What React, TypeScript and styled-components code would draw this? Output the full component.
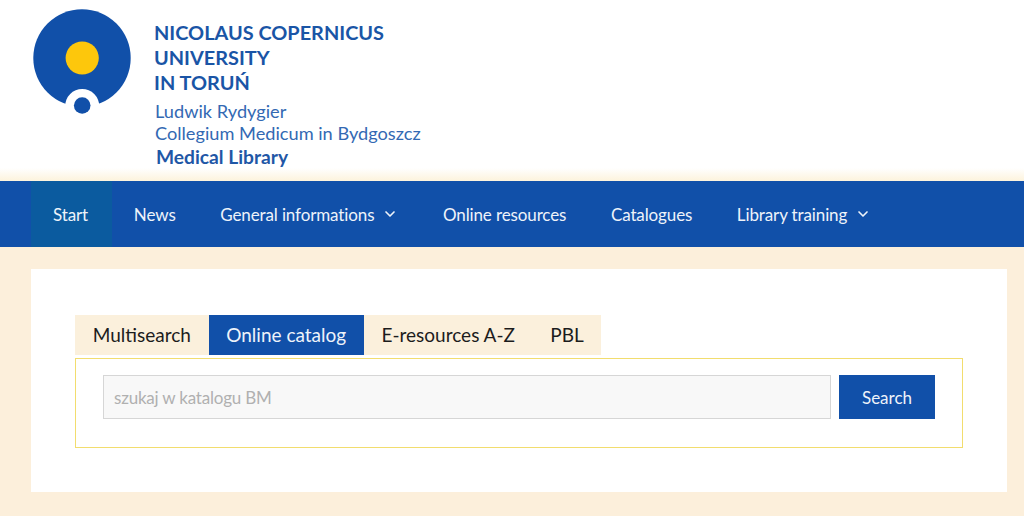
import React, { FC } from 'react';
import styled, { createGlobalStyle } from 'styled-components';
import { ChevronDown } from 'lucide-react';

const GlobalStyle = createGlobalStyle`
  html, body {
    margin: 0;
    padding: 0;
    background: #fcefdb;
    font-family: Lato, "Liberation Sans", sans-serif;
    overflow: hidden;
  }
`

const StyledHeader = styled.header`
  height: 181px;
  box-sizing: border-box;
  padding: 9px 0 0 33px;
  display: flex;
  background: linear-gradient(#fff 0, #fff 168px, #fdf3dc 181px);
`

const StyledLogoText = styled.div`
  margin: 11px 0 0 23px;
`

const StyledUniversity = styled.div`
  font-size: 19.9px;
  font-weight: 700;
  line-height: 25px;
  color: #1a55a6;
`

const StyledFaculty = styled.div`
  margin: 6px 0 0 1px;
  font-size: 18.2px;
  line-height: 21.5px;
  color: #3369b3;
`

const StyledLibrary = styled.div`
  margin: 1px 0 0 2px;
  font-size: 19.2px;
  font-weight: 700;
  line-height: 24px;
  color: #1f57a6;
`

const StyledNav = styled.nav`
  height: 66px;
  padding-left: 30.7px;
  display: flex;
  background: #1150a9;
`

const StyledNavItem = styled.a<{ $active?: boolean }>`
  padding: 0 ${p => (p.$active ? '23.5px' : '22.3px')} 0 22.3px;
  display: flex;
  align-items: center;
  gap: 8px;
  font-size: 17px;
  letter-spacing: -0.12px;
  color: #eef3fa;
  background: ${p => (p.$active ? '#0b5b9f' : 'transparent')};
`

const StyledMain = styled.main`
  margin: 22px 17px 0 31px;
  height: 223px;
  box-sizing: border-box;
  padding: 46px 44px 0;
  background: #fff;
`

const StyledTabs = styled.div`
  display: inline-flex;
  height: 40px;
  background: #fbf0dc;
  vertical-align: top;
`

const StyledTab = styled.a<{ $active?: boolean }>`
  padding: 0 17.7px 1px;
  display: flex;
  align-items: center;
  font-size: 19px;
  color: ${p => (p.$active ? '#eef3fa' : '#1c1c1c')};
  background: ${p => (p.$active ? '#1150a9' : 'transparent')};
`

const StyledPanel = styled.div`
  margin-top: 3px;
  height: 90px;
  box-sizing: border-box;
  padding: 16px 27px 0;
  display: flex;
  gap: 8px;
  border: 1px solid #f2dd6e;
`

const StyledInput = styled.input`
  flex: 1;
  min-width: 0;
  height: 44px;
  box-sizing: border-box;
  padding: 0 10px;
  border: 1px solid #d6d6d6;
  border-radius: 0;
  outline: none;
  background: #f8f8f8;
  font-family: inherit;
  font-size: 17px;
  letter-spacing: -0.2px;

  &::placeholder {
    color: #b0b0b0;
    opacity: 1;
  }
`

const StyledButton = styled.button`
  width: 96px;
  height: 44px;
  border: 0;
  background: #1150a9;
  color: #eef3fa;
  font-family: inherit;
  font-size: 17px;
`

const Logo: FC = () => (
  <svg width="98" height="108" viewBox="0 0 98 108" aria-hidden="true">
    <circle cx="49" cy="49" r="48.7" fill="#1150a9" />
    <circle cx="49.2" cy="97" r="17" fill="#fff" />
    <circle cx="49.2" cy="49" r="16.6" fill="#fdc70c" />
    <circle cx="49.2" cy="96.5" r="8.3" fill="#1150a9" />
  </svg>
)

const navItems = [
  { label: 'Start', active: true },
  { label: 'News' },
  { label: 'General informations', menu: true },
  { label: 'Online resources' },
  { label: 'Catalogues' },
  { label: 'Library training', menu: true },
]

const tabs = [
  { label: 'Multisearch' },
  { label: 'Online catalog', active: true },
  { label: 'E-resources A-Z' },
  { label: 'PBL' },
]

export default function App() {
  return (
    <>
      <GlobalStyle />
      <StyledHeader>
        <Logo />
        <StyledLogoText>
          <StyledUniversity>
            NICOLAUS COPERNICUS<br />UNIVERSITY<br />IN TORUŃ
          </StyledUniversity>
          <StyledFaculty>
            Ludwik Rydygier<br />Collegium Medicum in Bydgoszcz
          </StyledFaculty>
          <StyledLibrary>Medical Library</StyledLibrary>
        </StyledLogoText>
      </StyledHeader>
      <StyledNav>
        {navItems.map(item => (
          <StyledNavItem key={item.label} $active={item.active}>
            {item.label}
            {item.menu && <ChevronDown size={16} strokeWidth={2.5} />}
          </StyledNavItem>
        ))}
      </StyledNav>
      <StyledMain>
        <StyledTabs>
          {tabs.map(tab => (
            <StyledTab key={tab.label} $active={tab.active}>{tab.label}</StyledTab>
          ))}
        </StyledTabs>
        <StyledPanel>
          <StyledInput placeholder="szukaj w katalogu BM" />
          <StyledButton>Search</StyledButton>
        </StyledPanel>
      </StyledMain>
    </>
  )
}
